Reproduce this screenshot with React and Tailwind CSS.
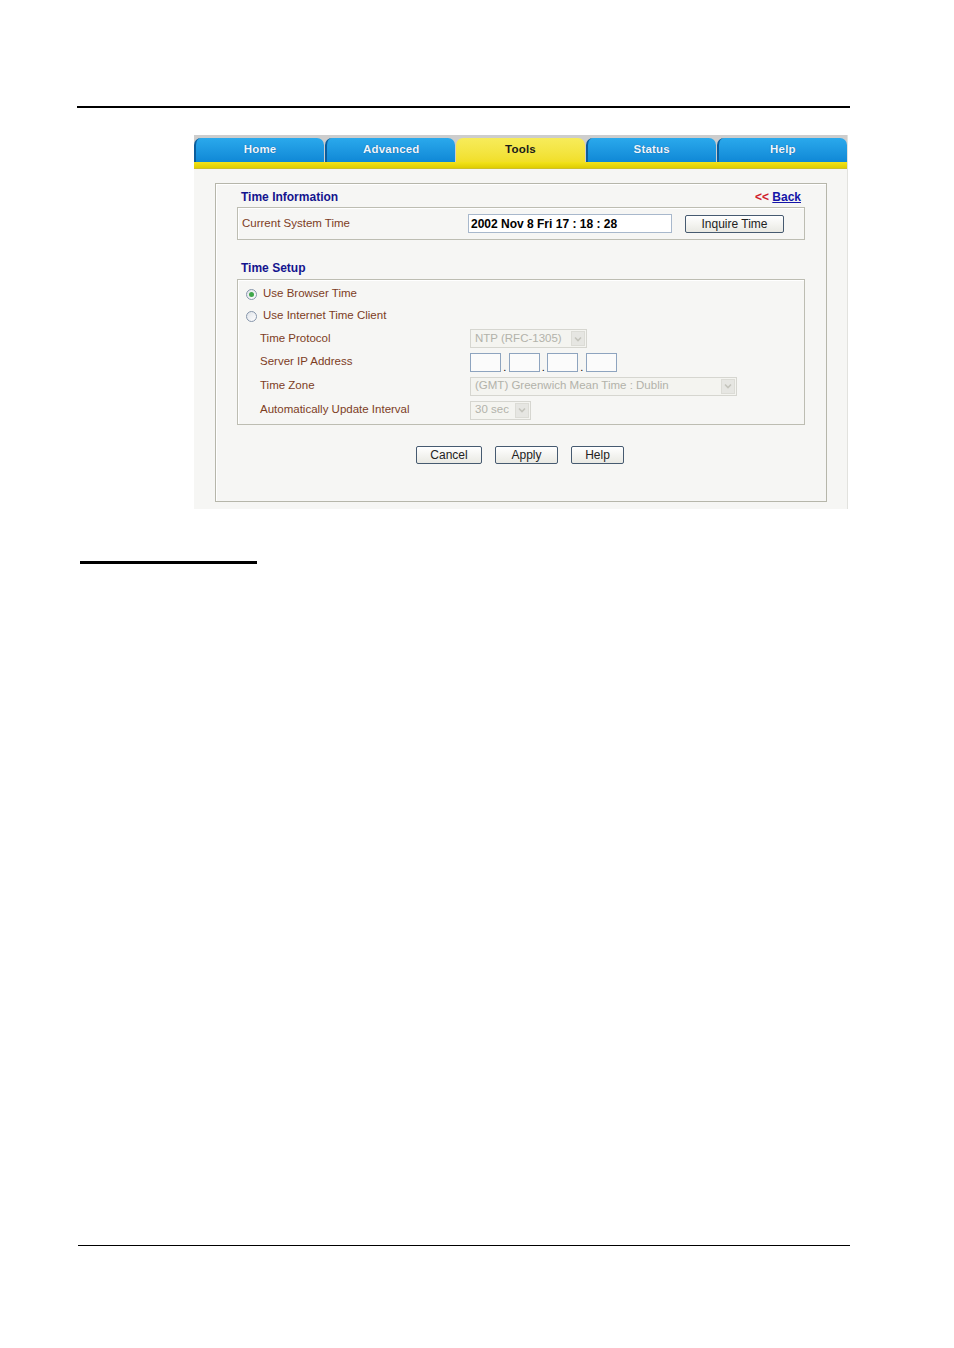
import React from 'react';

const FONT = { fontFamily: '"Liberation Sans", Arial, sans-serif' };

const TABS = ['Home', 'Advanced', 'Tools', 'Status', 'Help'];
const ACTIVE = 'Tools';

function Tab({ label }) {
  const on = label === ACTIVE;
  return (
    <div
      className={`flex-1 h-[24px] rounded-t-[7px] flex items-center justify-center text-[11.5px] font-bold tracking-[0.2px] ${
        on
          ? 'bg-gradient-to-b from-[#f7ec5a] to-[#f1df27] text-[#1a1a1a]'
          : 'bg-gradient-to-b from-[#2aa9ec] to-[#0f88d6] text-[#eef6ff] border-l-[2px] border-[#0b5d9c] [text-shadow:0_0_1px_#0a4f8a]'
      }`}
    >
      {label}
    </div>
  );
}

function Arrow() {
  return (
    <div className="w-[14px] h-[15px] mr-[1px] bg-[#e6e6e2] border border-[#dcdcd6] flex items-center justify-center">
      <svg width="8" height="6" viewBox="0 0 8 6">
        <path d="M1 1.5 L4 4.5 L7 1.5" fill="none" stroke="#c4c4bc" strokeWidth="1.6" />
      </svg>
    </div>
  );
}

function DisabledSelect({ width, text }) {
  return (
    <div
      className="h-[19px] bg-[#f4f4f0] border border-[#d6d6d0] flex items-center justify-between pl-[4px]"
      style={{ width }}
    >
      <span className="text-[11.5px] text-[#b2b2aa] whitespace-nowrap">{text}</span>
      <Arrow />
    </div>
  );
}

function Radio({ checked }) {
  return (
    <div className="w-[11px] h-[11px] rounded-full border border-[#8796ab] bg-gradient-to-br from-[#dfe3e8] to-white flex items-center justify-center">
      {checked && <div className="w-[5px] h-[5px] rounded-full bg-[#3fa64a]" />}
    </div>
  );
}

function Btn({ children, w }) {
  return (
    <div
      className="h-[18px] border border-[#465a70] rounded-[2px] bg-gradient-to-b from-white to-[#e9e9e3] flex items-center justify-center text-[12px] text-[#222]"
      style={{ width: w }}
    >
      {children}
    </div>
  );
}

function Label({ children }) {
  return <div className="w-[232px] pl-[22px] text-[11.5px] text-[#7d3d1f] whitespace-nowrap">{children}</div>;
}

export default function App() {
  return (
    <div className="w-[954px] h-[1348px] bg-white flex flex-col" style={FONT}>
      <div className="pt-[106px] pl-[77px]">
        <div className="w-[773px] h-[2px] bg-black" />
      </div>

      {/* router panel */}
      <div className="mt-[27px] ml-[194px] w-[654px] h-[374px] bg-[#f6f6f4] border-r border-[#e2e2de] flex flex-col">
        <div className="bg-[#cdcdcd] pt-[3px] flex gap-[1px]">
          {TABS.map(t => <Tab key={t} label={t} />)}
        </div>
        <div className="h-[7px] bg-gradient-to-b from-[#f3e31a] to-[#dfcd00] border-b border-[#cfbf2a]" />

        <div className="mt-[14px] ml-[21px] w-[612px] h-[319px] border border-[#b6b6aa] shadow-[inset_1px_1px_0_#ffffff] px-[21px] flex flex-col">
          <div className="h-[23px] flex items-center justify-between pt-[3px] px-[4px]">
            <span className="text-[12px] font-bold text-[#14148e]">Time Information</span>
            <span className="text-[12px] font-bold">
              <span className="text-[#d0202a]">&lt;&lt;</span>{' '}
              <span className="text-[#1414a8] underline">Back</span>
            </span>
          </div>

          <div className="h-[33px] border border-[#bdbdb2] shadow-[inset_1px_1px_0_#ffffff] flex items-center pl-[4px]">
            <div className="w-[226px] text-[11.5px] text-[#7d3d1f]">Current System Time</div>
            <div className="w-[204px] h-[19px] border border-[#a8b8cc] bg-white flex items-center pl-[2px] text-[12px] font-bold text-black whitespace-nowrap">
              2002 Nov 8 Fri 17 : 18 : 28
            </div>
            <div className="ml-[13px]">
              <Btn w="99px">Inquire Time</Btn>
            </div>
          </div>

          <div className="h-[39px] flex items-end pb-[4px] pl-[4px]">
            <span className="text-[12px] font-bold text-[#14148e] leading-[14px]">Time Setup</span>
          </div>

          <div className="h-[146px] border border-[#bdbdb2] shadow-[inset_1px_1px_0_#ffffff] pt-[3px] flex flex-col">
            <div className="h-[22px] flex items-center pl-[8px] gap-[6px]">
              <Radio checked />
              <span className="text-[11.5px] text-[#7d3d1f]">Use Browser Time</span>
            </div>
            <div className="h-[22px] flex items-center pl-[8px] gap-[6px]">
              <Radio />
              <span className="text-[11.5px] text-[#7d3d1f]">Use Internet Time Client</span>
            </div>
            <div className="h-[23px] flex items-center">
              <Label>Time Protocol</Label>
              <DisabledSelect width="117px" text="NTP (RFC-1305)" />
            </div>
            <div className="h-[24px] flex items-center">
              <Label>Server IP Address</Label>
              <div className="flex items-end">
                {[0, 1, 2, 3].map(i => (
                  <React.Fragment key={i}>
                    {i > 0 && <span className="w-[7.5px] text-[11px] leading-[10px] text-black text-center">.</span>}
                    <div className="w-[31px] h-[19px] border border-[#8ea4bf] bg-[#fbfbfb]" />
                  </React.Fragment>
                ))}
              </div>
            </div>
            <div className="h-[24px] flex items-center">
              <Label>Time Zone</Label>
              <DisabledSelect width="267px" text="(GMT) Greenwich Mean Time : Dublin" />
            </div>
            <div className="h-[24px] flex items-center">
              <Label>Automatically Update Interval</Label>
              <DisabledSelect width="61px" text="30 sec" />
            </div>
          </div>

          <div className="mt-[21px] flex justify-center gap-[13px] pr-[2px]">
            <Btn w="66px">Cancel</Btn>
            <Btn w="63px">Apply</Btn>
            <Btn w="53px">Help</Btn>
          </div>
        </div>
      </div>

      <div className="mt-[52px] ml-[80px] w-[177px] h-[3px] bg-black" />

      <div className="mt-[681px] ml-[78px] w-[772px] h-[1px] bg-black" />
    </div>
  );
}
